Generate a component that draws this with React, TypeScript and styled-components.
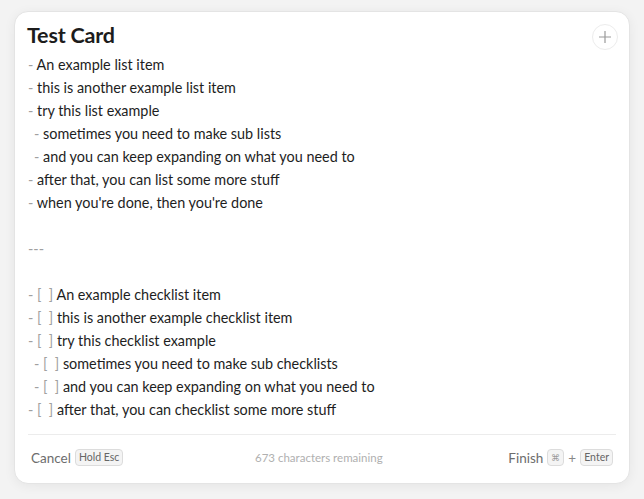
import React from "react";
import styled, { createGlobalStyle } from "styled-components";

const Global = createGlobalStyle`
  html, body { margin: 0; padding: 0; background: #f3f3f3; }
  body { font-family: Lato, "Open Sans", sans-serif; -webkit-font-smoothing: antialiased; }
`;

const Page = styled.div`
  width: 644px;
  height: 499px;
  padding: 11px 14px 15px 14px;
  box-sizing: border-box;
  display: flex;
`;

const Card = styled.div`
  flex: 1;
  background: #fff;
  border: 1px solid #e4e4e4;
  border-radius: 14px;
  box-shadow: 0 2px 12px rgba(0, 0, 0, 0.06);
  display: flex;
  flex-direction: column;
  padding: 0 13px 0 12px;
  position: relative;
`;

const Header = styled.div`
  display: flex;
  align-items: center;
  justify-content: space-between;
  padding-top: 9px;
  height: 28px;
`;

const Title = styled.h1`
  margin: 0;
  font-size: 21.5px;
  font-weight: 700;
  color: #1c1c1c;
  letter-spacing: -0.2px;
  line-height: 26px;
`;

const PlusButton = styled.button`
  width: 26px;
  height: 26px;
  border-radius: 50%;
  border: 1px solid #ececec;
  background: #fff;
  display: flex;
  align-items: center;
  justify-content: center;
  padding: 0;
  margin-right: -2px;
  margin-top: 4px;
`;

const Body = styled.div`
  flex: 1;
  padding-top: 4px;
`;

const Line = styled.div<{ $indent?: boolean }>`
  height: 23px;
  line-height: 23px;
  font-size: 14.4px;
  color: #1e1e1e;
  white-space: pre;
  padding-left: ${(p) => (p.$indent ? "7px" : "1px")};
`;

const Mark = styled.span`
  color: #a0a0a0;
`;

const Footer = styled.div`
  border-top: 1px solid #ececec;
  height: 49px;
  box-sizing: border-box;
  display: flex;
  align-items: center;
  justify-content: space-between;
  padding: 0 3px 3px 3px;
  margin-left: 1px;
  font-size: 13.5px;
`;

const Side = styled.div`
  display: flex;
  align-items: center;
  gap: 4px;
  color: #6d6d6d;
`;

const Key = styled.span<{ $w?: number }>`
  display: inline-flex;
  align-items: center;
  justify-content: center;
  height: 15px;
  padding: 0 3px;
  ${(p) => (p.$w ? `width: ${p.$w}px; padding: 0;` : "")}
  font-size: 10.5px;
  color: #666;
  background: #f4f4f4;
  border: 1px solid #dcdcdc;
  border-radius: 4px;
  line-height: 1;
`;

const CmdKey = styled(Key)`
  font-size: 9px;
  color: #999;
`;

const Remaining = styled.div`
  font-size: 11.5px;
  color: #b0b0b0;
  margin-left: 6px;
`;

const Plus = styled.span`
  color: #888;
`;

type Item = { text: string; indent?: boolean };

const list: Item[] = [
  { text: "An example list item" },
  { text: "this is another example list item" },
  { text: "try this list example" },
  { text: "sometimes you need to make sub lists", indent: true },
  { text: "and you can keep expanding on what you need to", indent: true },
  { text: "after that, you can list some more stuff" },
  { text: "when you're done, then you're done" },
];

const checks: Item[] = [
  { text: "An example checklist item" },
  { text: "this is another example checklist item" },
  { text: "try this checklist example" },
  { text: "sometimes you need to make sub checklists", indent: true },
  { text: "and you can keep expanding on what you need to", indent: true },
  { text: "after that, you can checklist some more stuff" },
];

export default function App() {
  return (
    <>
      <Global />
      <Page>
        <Card>
          <Header>
            <Title>Test Card</Title>
            <PlusButton aria-label="add">
              <svg width="14" height="14" viewBox="0 0 14 14">
                <path d="M7 1v12M1 7h12" stroke="#9a9a9a" strokeWidth="1.2" fill="none" />
              </svg>
            </PlusButton>
          </Header>
          <Body>
            {list.map((it, i) => (
              <Line key={"l" + i} $indent={it.indent}>
                <Mark>- </Mark>
                {it.text}
              </Line>
            ))}
            <Line />
            <Line>
              <Mark>---</Mark>
            </Line>
            <Line />
            {checks.map((it, i) => (
              <Line key={"c" + i} $indent={it.indent}>
                <Mark>- [  ] </Mark>
                {it.text}
              </Line>
            ))}
          </Body>
          <Footer>
            <Side>
              Cancel <Key>Hold Esc</Key>
            </Side>
            <Remaining>673 characters remaining</Remaining>
            <Side>
              Finish <CmdKey $w={15}>⌘</CmdKey>
              <Plus>+</Plus>
              <Key>Enter</Key>
            </Side>
          </Footer>
        </Card>
      </Page>
    </>
  );
}
